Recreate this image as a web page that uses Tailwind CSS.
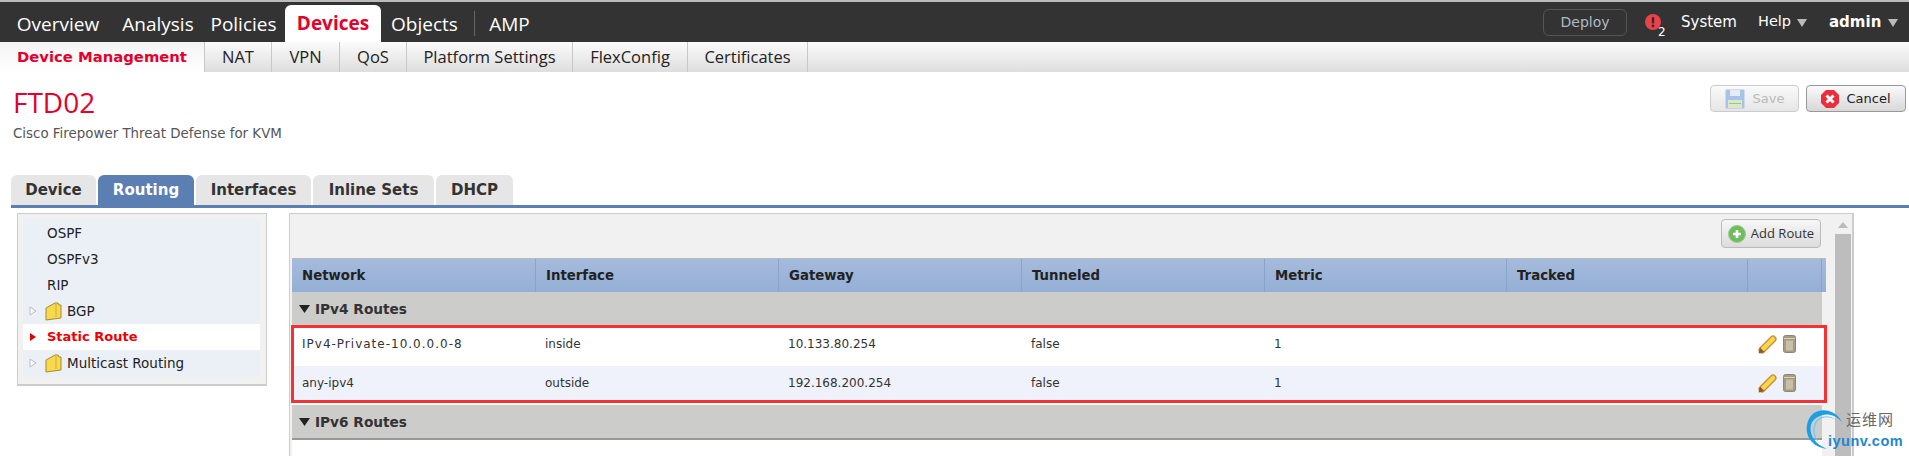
<!DOCTYPE html>
<html lang="en">
<head>
    <meta charset="UTF-8">
    <title>FTD02</title>
    <script src="https://cdn.jsdelivr.net/npm/@tailwindcss/browser@4"></script>
</head>
<body class="relative h-[456px] w-[1909px] overflow-hidden bg-white font-['DejaVu_Sans',sans-serif] text-[#333]">
    <!-- Top nav -->
    <div class="h-[2px] bg-[#bbb]"></div>
    <div class="flex h-10 items-end justify-between bg-[#333] text-white">
        <div class="flex items-end pl-[9px] font-['Open_Sans',sans-serif] text-[19px]">
            <div class="flex h-9 w-[98px] items-center justify-center">Overview</div>
            <div class="flex h-9 w-[102px] items-center justify-center">Analysis</div>
            <div class="flex h-9 w-[69px] items-center justify-center">Policies</div>
            <div class="ml-[7px] flex h-[37px] w-[96px] items-center justify-center rounded-t-md bg-white font-bold text-[#e4002b]">Devices</div>
            <div class="flex h-9 w-[87px] items-center justify-center">Objects</div>
            <div class="ml-[6px] mb-[6px] h-[25px] w-px bg-[#666]"></div>
            <div class="flex h-9 w-[69px] items-center justify-center">AMP</div>
        </div>
        <div class="flex h-10 items-center pr-[11px] text-[15px]">
            <div class="flex h-[27px] w-[84px] items-center justify-center rounded-md border border-[#555] text-[14px] text-[#aebbc4]">Deploy</div>
            <div class="relative ml-[18px] mr-[20px] h-4 w-4">
                <svg class="h-4 w-4" viewBox="0 0 16 16"><circle cx="8" cy="8" r="8" fill="#e9424a"/><rect x="6.800" y="3" width="2.400" height="6.500" rx="1" fill="#3a2a2a"/><circle cx="8" cy="12" r="1.400" fill="#3a2a2a"/></svg>
                <span class="absolute left-[13px] top-[11px] text-[12px] leading-[14px] text-white">2</span>
            </div>
            <span class="w-[56px]">System</span>
            <span class="ml-[21px] w-[33px] text-[14.500px]">Help</span>
            <svg class="ml-[6px] mt-px h-2 w-[10px]" viewBox="0 0 10 8"><path d="M0 0h10L5 8z" fill="#bbb"/></svg>
            <span class="ml-[22px] w-[52px] font-bold">admin</span>
            <svg class="ml-[7px] mt-px h-2 w-[10px]" viewBox="0 0 10 8"><path d="M0 0h10L5 8z" fill="#bbb"/></svg>
        </div>
    </div>

    <!-- Sub nav -->
    <div class="flex h-[30px] bg-gradient-to-b from-[#fbfbfb] to-[#dedede] font-['Open_Sans',sans-serif] text-[16.500px] text-[#222]">
        <div class="flex w-[204px] items-center justify-center bg-gradient-to-b from-[#f4f4f4] to-white font-['DejaVu_Sans',sans-serif] text-[14.800px] font-bold text-[#e4002b]">Device Management</div>
        <div class="flex w-[67px] items-center justify-center border-l border-[#c8c8c8]">NAT</div>
        <div class="flex w-[68px] items-center justify-center border-l border-[#c8c8c8]">VPN</div>
        <div class="flex w-[67px] items-center justify-center border-l border-[#c8c8c8]">QoS</div>
        <div class="flex w-[166px] items-center justify-center border-l border-[#c8c8c8]">Platform Settings</div>
        <div class="flex w-[115px] items-center justify-center border-l border-[#c8c8c8]">FlexConfig</div>
        <div class="flex w-[121px] items-center justify-center border-x border-[#c8c8c8]">Certificates</div>
    </div>

    <!-- Title and buttons -->
    <div class="flex h-[103px] justify-between pl-[13px] pr-[3px]">
        <div>
            <h1 class="mt-[12px] font-['Open_Sans',sans-serif] text-[28px] leading-[36px] text-[#e4002b]">FTD02</h1>
            <p class="mt-[6px] text-[13.400px] leading-4 text-[#555]">Cisco Firepower Threat Defense for KVM</p>
        </div>
        <div class="mt-[13px] flex gap-[7px] text-[13px]">
            <div class="flex h-[27px] w-[89px] items-center justify-center gap-2 rounded border border-[#ccc] bg-gradient-to-b from-[#fafafa] to-[#e6e6e6] text-[#bbb]">
                <svg class="h-5 w-5" viewBox="0 0 20 20"><rect x="0.500" y="0.500" width="19" height="19" rx="1" fill="#a9c3e8"/><rect x="5" y="1" width="10" height="6" fill="#e3ecf7"/><rect x="3" y="11" width="14" height="8" fill="#dbe8c8"/><rect x="4" y="14" width="12" height="1" fill="#9fc48a"/></svg>
                <span>Save</span>
            </div>
            <div class="flex h-[27px] w-[100px] items-center justify-center gap-[7px] rounded border border-[#999] bg-gradient-to-b from-[#fafafa] to-[#d8d8d8] text-[#222]">
                <svg class="h-[18px] w-[18px]" viewBox="0 0 18 18"><path d="M5 0h8l5 5v8l-5 5H5l-5-5V5z" fill="#ee2d3a"/><path d="M5.500 5.500l7 7M12.500 5.500l-7 7" stroke="#fff" stroke-width="3"/></svg>
                <span>Cancel</span>
            </div>
        </div>
    </div>

    <!-- Tabs -->
    <div class="ml-[11px] flex gap-[2px] border-b-[3px] border-[#5b7fb3] text-[15px] font-bold text-[#333]">
        <div class="flex h-[30px] w-[85px] items-center justify-center rounded-t-md bg-[#e6e6e6]">Device</div>
        <div class="flex h-[30px] w-[96px] items-center justify-center rounded-t-md bg-[#5b7fb3] text-white">Routing</div>
        <div class="flex h-[30px] w-[115px] items-center justify-center rounded-t-md bg-[#e6e6e6]">Interfaces</div>
        <div class="flex h-[30px] w-[121px] items-center justify-center rounded-t-md bg-[#e6e6e6]">Inline Sets</div>
        <div class="flex h-[30px] w-[77px] items-center justify-center rounded-t-md bg-[#e6e6e6]">DHCP</div>
    </div>

    <!-- Content -->
    <div class="mt-[5px] flex items-start pl-[17px]">
        <!-- Left tree -->
        <div class="h-[173px] w-[250px] border border-b-2 border-[#ccc] bg-[#f1f1f1] py-[5px] pl-[5px] pr-[6px] text-[13.500px] text-[#222]">
            <div class="bg-[#ebf0f7] py-px">
                <div class="flex h-[26px] items-center pl-[24px]">OSPF</div>
                <div class="flex h-[26px] items-center pl-[24px]">OSPFv3</div>
                <div class="flex h-[26px] items-center pl-[24px]">RIP</div>
                <div class="flex h-[26px] items-center pl-[6px]">
                    <svg class="h-[10px] w-2" viewBox="0 0 8 10"><path d="M1 1l6 4-6 4z" fill="#fff" stroke="#bbb"/></svg>
                    <svg class="ml-[8px] h-[19px] w-[17px]" viewBox="0 0 17 19"><path d="M1 6l9-5h3l1 2h2v13l-15 2z" fill="#f5d94e" stroke="#a98a2a"/><path d="M11 2v13" stroke="#d2ad2e"/></svg>
                    <span class="ml-[5px]">BGP</span>
                </div>
                <div class="flex h-[26px] items-center bg-white pl-[6px] text-[13px] font-bold text-[#f00000]">
                    <svg class="h-[10px] w-2" viewBox="0 0 8 10"><path d="M1 1l6 4-6 4z" fill="#d00"/></svg>
                    <span class="ml-[10px]">Static Route</span>
                </div>
                <div class="flex h-[26px] items-center pl-[6px]">
                    <svg class="h-[10px] w-2" viewBox="0 0 8 10"><path d="M1 1l6 4-6 4z" fill="#fff" stroke="#bbb"/></svg>
                    <svg class="ml-[8px] h-[19px] w-[17px]" viewBox="0 0 17 19"><path d="M1 6l9-5h3l1 2h2v13l-15 2z" fill="#f5d94e" stroke="#a98a2a"/><path d="M11 2v13" stroke="#d2ad2e"/></svg>
                    <span class="ml-[5px]">Multicast Routing</span>
                </div>
            </div>
        </div>

        <!-- Right panel -->
        <div class="ml-[22px] flex h-[260px] w-[1565px] border border-r-2 border-[#ccc] bg-[#f1f1f1]">
            <div class="w-[1536px] pl-[2px]">
                <div class="flex h-[44px] justify-end pr-[5px] pt-[5px]">
                    <div class="flex h-[29px] w-[100px] items-center justify-center gap-[5px] rounded border border-[#bbb] bg-gradient-to-b from-[#f7f7f7] to-[#dcdcdc] font-['Open_Sans',sans-serif] text-[13px] text-[#333]">
                        <svg class="h-[18px] w-[18px]" viewBox="0 0 18 18"><circle cx="9" cy="9" r="8.500" fill="#6fbd5d" stroke="#9acb8b"/><path d="M9 5v8M5 9h8" stroke="#fff" stroke-width="2.600"/></svg>
                        <span>Add Route</span>
                    </div>
                </div>
                <div class="grid h-[34px] grid-cols-[243px_243px_243px_243px_242px_241px_75px_1fr] border-t border-[#bbb] bg-gradient-to-b from-[#a5bbdc] to-[#94afd6] text-[13.300px] font-bold text-[#222]">
                    <div class="flex items-center pl-[10px]">Network</div>
                    <div class="flex items-center border-l border-[#87a3cc] pl-[10px]">Interface</div>
                    <div class="flex items-center border-l border-[#87a3cc] pl-[10px]">Gateway</div>
                    <div class="flex items-center border-l border-[#87a3cc] pl-[10px]">Tunneled</div>
                    <div class="flex items-center border-l border-[#87a3cc] pl-[10px]">Metric</div>
                    <div class="flex items-center border-l border-[#87a3cc] pl-[10px]">Tracked</div>
                    <div class="border-x border-[#87a3cc]"></div>
                    <div></div>
                </div>
                <div class="mr-[4px] flex h-[33px] items-center bg-[#cccccb] pl-[7px] pt-[2px] text-[13.700px] font-bold text-[#333]">
                    <svg class="-mt-[2px] h-2 w-[11px]" viewBox="0 0 11 8"><path d="M0 0h11L5.500 8z" fill="#222"/></svg>
                    <span class="ml-[5px]">IPv4 Routes</span>
                </div>
                <div class="-mx-px border-[3px] border-[#f33333] bg-white text-[12px] text-[#333]">
                    <div class="grid h-[38px] grid-cols-[241px_243px_243px_243px_242px_241px_1fr] items-center pb-[6px]">
                        <div class="pl-[8px] tracking-[1px]">IPv4-Private-10.0.0.0-8</div>
                        <div class="pl-[10px]">inside</div>
                        <div class="pl-[10px]">10.133.80.254</div>
                        <div class="pl-[10px]">false</div>
                        <div class="pl-[10px]">1</div>
                        <div></div>
                        <div class="flex items-center gap-[6px] pl-[11px]">
                            <svg class="h-[19px] w-[19px]" viewBox="0 0 19 19"><path d="M4 15L15 4" stroke="#c98a35" stroke-width="7" stroke-linecap="round"/><path d="M4 15L15 4" stroke="#f7d64c" stroke-width="4.500" stroke-linecap="round"/><path d="M0.500 18.500l1.500-6 4.500 4.500z" fill="#8a5a30"/></svg>
                            <svg class="h-[18px] w-[13px]" viewBox="0 0 13 18"><rect x="0.500" y="0.500" width="12" height="17" rx="2" fill="#a59c82" stroke="#8f876f"/><rect x="1" y="3" width="11" height="1" fill="#d8d2bf"/><rect x="3" y="5.500" width="7" height="10" fill="#c6bfa9"/></svg>
                        </div>
                    </div>
                    <div class="grid h-[34px] grid-cols-[241px_243px_243px_243px_242px_241px_1fr] items-center bg-[#eff2fa]">
                        <div class="pl-[8px]">any-ipv4</div>
                        <div class="pl-[10px]">outside</div>
                        <div class="pl-[10px]">192.168.200.254</div>
                        <div class="pl-[10px]">false</div>
                        <div class="pl-[10px]">1</div>
                        <div></div>
                        <div class="flex items-center gap-[6px] pl-[11px]">
                            <svg class="h-[19px] w-[19px]" viewBox="0 0 19 19"><path d="M4 15L15 4" stroke="#c98a35" stroke-width="7" stroke-linecap="round"/><path d="M4 15L15 4" stroke="#f7d64c" stroke-width="4.500" stroke-linecap="round"/><path d="M0.500 18.500l1.500-6 4.500 4.500z" fill="#8a5a30"/></svg>
                            <svg class="h-[18px] w-[13px]" viewBox="0 0 13 18"><rect x="0.500" y="0.500" width="12" height="17" rx="2" fill="#a59c82" stroke="#8f876f"/><rect x="1" y="3" width="11" height="1" fill="#d8d2bf"/><rect x="3" y="5.500" width="7" height="10" fill="#c6bfa9"/></svg>
                        </div>
                    </div>
                </div>
                <div class="mr-[4px] bg-white pt-[2px]">
                    <div class="flex h-[35px] items-center border-b-2 border-[#999] bg-[#cccccb] pl-[7px] pt-[2px] text-[13.700px] font-bold text-[#333]">
                        <svg class="-mt-[2px] h-2 w-[11px]" viewBox="0 0 11 8"><path d="M0 0h11L5.500 8z" fill="#222"/></svg>
                        <span class="ml-[5px]">IPv6 Routes</span>
                    </div>
                    <div class="h-[20px] bg-white"></div>
                </div>
            </div>
            <!-- Scrollbar -->
            <div class="ml-[9px] flex w-4 flex-col items-center">
                <svg class="mt-[8px] h-[6px] w-[10px]" viewBox="0 0 10 6"><path d="M5 0l5 6H0z" fill="#bbb"/></svg>
                <div class="mt-[6px] w-4 flex-1 bg-[#bdbdbd]"></div>
            </div>
        </div>
    </div>

    <!-- Watermark -->
    <div class="absolute left-[1806px] top-[408px] h-[42px] w-[100px]">
        <svg class="absolute left-0 top-0 h-[42px] w-[40px]" viewBox="0 0 40 42"><path d="M36 14C28 -2 4 -2 1 17c-2 11 5 22 20 24C8 36 3 26 5 17 7 8 24 0 36 14z" fill="#1c9fe0"/><path d="M30 12C20 6 11 10 9 19c-1 6 1 12 5 16-6-4-8-11-6-18C10 8 23 5 30 12z" fill="#7cc8ee"/></svg>
        <span class="absolute left-[40px] top-[2px] font-['Noto_Sans_CJK_SC',sans-serif] text-[15px] leading-[18px] tracking-[1px] text-[#666]">运维网</span>
        <span class="absolute left-[22px] top-[24px] font-['Liberation_Sans',sans-serif] text-[14.500px] font-bold leading-[18px] tracking-[0.500px] text-[#1e88d2]">iyunv.com</span>
    </div>
</body>
</html>
